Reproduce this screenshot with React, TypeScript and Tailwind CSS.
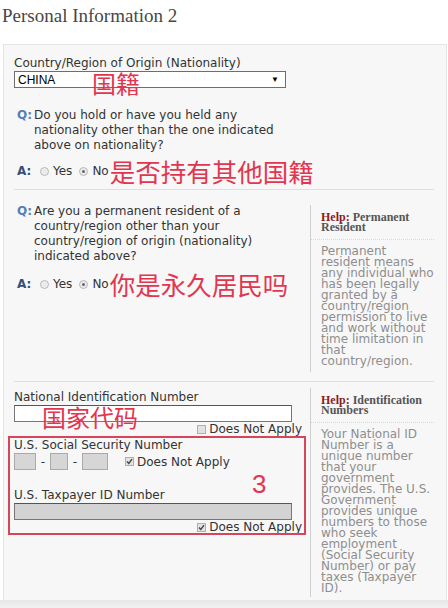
import React from 'react';

const RED = 'text-[#e2364f]';

function Radio({ checked }: { checked?: boolean }) {
  return (
    <span className="inline-flex w-[9px] h-[9px] rounded-full border border-[#b8b8b8] bg-[#ececec] items-center justify-center shrink-0">
      {checked && <span className="w-[3px] h-[3px] rounded-full bg-[#666]" />}
    </span>
  );
}

function Check({ checked }: { checked?: boolean }) {
  return (
    <span className="inline-flex w-[9px] h-[9px] border border-[#b0b0b0] bg-[#e2e2e2] items-center justify-center shrink-0">
      {checked && (
        <svg width="7" height="7" viewBox="0 0 7 7">
          <path d="M1 3.6 L2.8 5.4 L6 1.2" fill="none" stroke="#444" strokeWidth="1.4" />
        </svg>
      )}
    </span>
  );
}

function DoesNotApply({ checked }: { checked?: boolean }) {
  return (
    <span className="inline-flex items-center gap-[3px] text-[12px] leading-[14px] text-[#333]">
      <Check checked={checked} />
      Does Not Apply
    </span>
  );
}

function Question({ lines, answer, note, mt }: { lines: string[]; answer: string; note: string; mt: string }) {
  return (
    <div className="pl-[3px]">
      <div className="flex text-[12px] leading-[15px]">
        <span className="w-[17px] shrink-0 font-bold text-[#5a7db2]">Q:</span>
        <span className="text-[#333]">
          {lines.map((l, i) => (
            <span key={i} className="block whitespace-nowrap">{l}</span>
          ))}
        </span>
      </div>
      <div className={`flex items-center h-[26px] ${mt}`}>
        <span className="w-[23px] shrink-0 font-bold text-[12px] text-[#34507a]">A:</span>
        <Radio />
        <span className="ml-[4px] text-[12px] text-[#333]">Yes</span>
        <span className="ml-[7px]" />
        <Radio checked />
        <span className="ml-[4px] text-[12px] text-[#333]">{answer}</span>
        <span className={`ml-[1px] text-[25.5px] leading-[26px] font-['Noto_Sans_CJK_SC',sans-serif] ${RED}`}>{note}</span>
      </div>
    </div>
  );
}

function Help({ title, body, className }: { title: string[]; body: string[]; className: string }) {
  return (
    <div className={`flex-1 border-l border-[#cfcfcf] ${className}`}>
      <div className="pl-[10px] pt-[7px] pb-[7px] border-b border-dotted border-[#d8d8d8] font-['Liberation_Serif',serif] font-bold text-[12px] leading-[10px] text-[#555]">
        <span className="text-[#8c1d1d]">Help:</span> {title[0]}
        <br />
        {title[1]}
      </div>
      <div className="pl-[10px] pt-[6px] text-[12px] leading-[11px] text-[#8e8e8e]">
        {body.map((l, i) => (
          <span key={i} className="block whitespace-nowrap">{l}</span>
        ))}
      </div>
    </div>
  );
}

export default function App() {
  return (
    <div className="w-[448px] h-[608px] bg-white overflow-hidden font-['DejaVu_Sans',sans-serif]">
      <div className="h-[44px] pl-[2px] pt-[5px] font-['Liberation_Serif',serif] text-[19px] leading-[22px] text-[#474747]">
        Personal Information 2
      </div>

      <div className="ml-[3px] w-[444px] h-[556px] border-t border-l border-r border-[#e4e4e4] bg-[#f7f7f8] pl-[10px] pr-[12px]">
        {/* Section 1: nationality */}
        <div className="relative pt-[11px] pb-[5px] border-b border-[#dedede]">
          <div className="text-[12px] leading-[14px] text-[#333]">Country/Region of Origin (Nationality)</div>
          <div className="mt-[1px] w-[272px] h-[17px] bg-white border border-[#6e6e6e] flex items-center justify-between pl-[3px] pr-[6px] font-['Liberation_Sans',sans-serif] text-[12px] text-black">
            <span>CHINA</span>
            <span className="text-[8px] leading-none">▼</span>
          </div>
          <span className={`absolute left-[78px] top-[25px] text-[24px] leading-[26px] font-['Noto_Sans_CJK_SC',sans-serif] ${RED}`}>国籍</span>
          <div className="mt-[20px]">
            <Question
              lines={['Do you hold or have you held any', 'nationality other than the one indicated', 'above on nationality?']}
              answer="No"
              note="是否持有其他国籍"
              mt="mt-[5px]"
            />
          </div>
        </div>

        {/* Section 2: permanent resident */}
        <div className="flex border-b border-[#dedede]">
          <div className="w-[288px] pt-[14px]">
            <Question
              lines={['Are you a permanent resident of a', 'country/region other than your', 'country/region of origin (nationality)', 'indicated above?']}
              answer="No"
              note="你是永久居民吗"
              mt="mt-[7px]"
            />
          </div>
          <Help
            className="ml-[8px] mt-[15px] mb-[9px] pb-[5px]"
            title={['Permanent', 'Resident']}
            body={[
              'Permanent',
              'resident means',
              'any individual who',
              'has been legally',
              'granted by a',
              'country/region',
              'permission to live',
              'and work without',
              'time limitation in',
              'that',
              'country/region.',
            ]}
          />
        </div>

        {/* Section 3: identification numbers */}
        <div className="flex">
          <div className="relative w-[288px] pt-[8px] text-[12px] leading-[14px] text-[#333]">
            <div>National Identification Number</div>
            <div className="mt-[1px] w-[278px] h-[17px] bg-white border border-[#777] border-t-[#555]" />
            <div className="flex justify-end">
              <DoesNotApply />
            </div>
            <span className={`absolute left-[28px] top-[22px] text-[24px] leading-[26px] font-['Noto_Sans_CJK_SC',sans-serif] ${RED}`}>国家代码</span>

            <div className="mt-[2px]">U.S. Social Security Number</div>
            <div className="mt-[1px] flex items-center h-[17px]">
              <span className="w-[22px] h-[17px] bg-[#d6d6d6] border border-[#aaa]" />
              <span className="w-[14px] text-center">-</span>
              <span className="w-[18px] h-[17px] bg-[#d6d6d6] border border-[#aaa]" />
              <span className="w-[14px] text-center">-</span>
              <span className="w-[26px] h-[17px] bg-[#d6d6d6] border border-[#aaa]" />
              <span className="ml-[17px]">
                <DoesNotApply checked />
              </span>
            </div>

            <div className="mt-[18px]">U.S. Taxpayer ID Number</div>
            <div className="mt-[1px] w-[278px] h-[17px] bg-[#d3d3d3] border border-[#777] border-t-[#555]" />
            <div className="flex justify-end">
              <DoesNotApply checked />
            </div>

            <span className="absolute left-[-6px] top-[54px] w-[298px] h-[99px] border-2 border-[#d8445a]" />
            <span className={`absolute left-[238px] top-[89px] text-[26px] leading-[26px] font-['Liberation_Sans',sans-serif] ${RED}`}>3</span>
          </div>
          <Help
            className="ml-[8px] mt-[6px] pb-[3px]"
            title={['Identification', 'Numbers']}
            body={[
              'Your National ID',
              'Number is a',
              'unique number',
              'that your',
              'government',
              'provides. The U.S.',
              'Government',
              'provides unique',
              'numbers to those',
              'who seek',
              'employment',
              '(Social Security',
              'Number) or pay',
              'taxes (Taxpayer',
              'ID).',
            ]}
          />
        </div>
      </div>
      <div className="h-[8px] bg-gradient-to-b from-[#e6e6e6] to-[#f2f2f2]" />
    </div>
  );
}
